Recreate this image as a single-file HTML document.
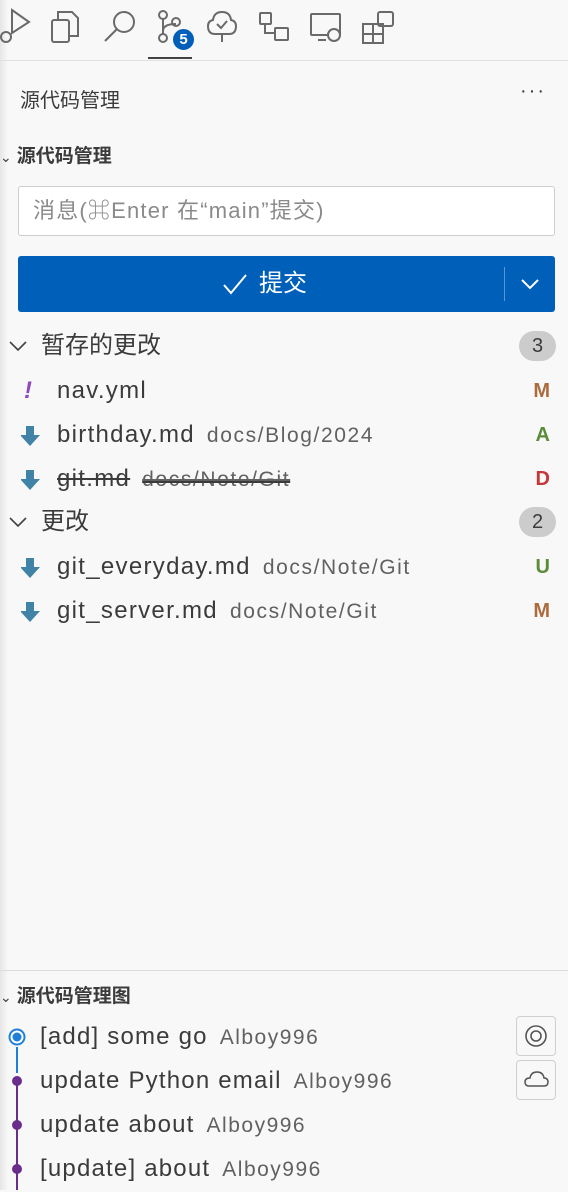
<!DOCTYPE html>
<html><head><meta charset="utf-8"><style>
*{margin:0;padding:0;box-sizing:border-box}
body{width:568px;height:1190px;overflow:hidden;background:#f8f8f8;font-family:"Liberation Sans","Noto Sans CJK SC",sans-serif;color:#3b3b3b;position:relative}
.abs{position:absolute;white-space:nowrap}
.shadow{position:absolute;left:0;top:0;width:8px;height:1190px;background:linear-gradient(90deg,#e6e6e6,#f8f8f8)}
.row{position:absolute;left:0;width:568px;height:44px;font-size:24px;line-height:44px}
.row .n{position:absolute;left:57px;letter-spacing:1.3px}
.row .d{font-size:21px;color:#616161;margin-left:12px;letter-spacing:1.6px}
.st{position:absolute;right:18px;font-weight:bold;font-size:20px}
.badge{position:absolute;right:12px;top:7px;width:37px;height:30px;border-radius:15px;background:#cccccc;color:#3b3b3b;font-size:20px;text-align:center;line-height:30px}
.arrow{position:absolute;left:21px;top:12px}
.g{position:absolute;left:40px;font-size:24px;line-height:44px;height:44px;letter-spacing:1.2px}
.g .d{font-size:21px;color:#616161;margin-left:12px;letter-spacing:1.5px}
</style></head><body>
<div class="shadow"></div>
<svg class="abs" style="left:0;top:0" width="400" height="62" viewBox="0 0 400 62" fill="none" stroke="#6a6a6a" stroke-width="2">
<path d="M12 10 L29 22 L12 33 Z"/><circle cx="6" cy="37" r="5"/>
<rect x="52" y="20" width="17" height="22" rx="2"/><path d="M58 20 V12 h14 l6 6 v18 h-9"/>
<circle cx="124" cy="22" r="10"/><path d="M117 29 L105 41"/>
<circle cx="163" cy="15" r="4"/><circle cx="163" cy="38" r="4"/><circle cx="176" cy="22" r="4"/><path d="M163 19 V34 M163 31 q0-7 13-7"/>
<path d="M215 34 q-7 0 -7-8 q0-5 5-6 q1-8 9-8 q8 0 9 8 q5 1 5 6 q0 8-7 8 h-14 M222 34 v8 M217 24 l4 4 l6-7"/>
<rect x="260" y="13" width="11" height="11" rx="1"/><rect x="275" y="28" width="13" height="12" rx="1"/><path d="M265 24 v9 h10"/>
<rect x="311" y="14" width="29" height="21" rx="1"/><path d="M318 40 h8"/><circle cx="334" cy="35" r="6" fill="#f8f8f8"/>
<rect x="363" y="24" width="10" height="10"/><rect x="373" y="24" width="10" height="10"/><rect x="363" y="34" width="10" height="9"/><rect x="373" y="34" width="10" height="9"/><rect x="378" y="12" width="15" height="14" rx="2"/>
</svg>
<div class="abs" style="left:171px;top:27px;width:25px;height:25px;border-radius:13px;background:#005fb8;border:2px solid #f8f8f8;color:#fff;font-weight:bold;font-size:15px;text-align:center;line-height:21px">5</div>
<div class="abs" style="left:148px;top:57px;width:44px;height:2px;background:#424242"></div>
<div class="abs" style="left:0;top:60px;width:568px;height:1px;background:#e0e0e0"></div>

<div class="abs" style="left:20px;top:84px;font-size:20px">源代码管理</div>
<div class="abs" style="left:520px;top:80px;font-size:20px;letter-spacing:2px">···</div>

<div class="abs" style="left:0;top:141px;font-size:19px;font-weight:bold"><span style="font-weight:normal;font-size:14px;margin-right:5px">⌄</span>源代码管理</div>

<div class="abs" style="left:18px;top:186px;width:537px;height:50px;border:1px solid #cecece;border-radius:3px;background:#fff;font-size:22px;color:#8a8a8a;line-height:48px;padding-left:14px;letter-spacing:1.2px">消息(⌘Enter 在“main”提交)</div>

<div class="abs" style="left:18px;top:256px;width:537px;height:56px;background:#005fb8;border-radius:3px;color:#fff">
<svg class="abs" style="left:204px;top:17px" width="26" height="22"><path d="M2 12 l7 8 L24 2" stroke="#fff" stroke-width="2" fill="none"/></svg>
<div class="abs" style="left:241px;line-height:56px;font-size:24px">提交</div>
<div class="abs" style="left:486px;top:11px;width:1px;height:34px;background:#5e95d0"></div>
<svg class="abs" style="left:502px;top:20px" width="20" height="16"><path d="M2 4 l8 8 l8-8" stroke="#fff" stroke-width="2" fill="none"/></svg>
</div>

<div class="row" style="top:324px"><svg class="abs" style="left:8px;top:15px" width="20" height="14"><path d="M2 3 l8 8 l8-8" stroke="#424242" stroke-width="1.6" fill="none"/></svg><span class="abs" style="left:41px">暂存的更改</span><span class="badge">3</span></div>
<div class="row" style="top:369px"><span class="abs" style="left:24px;color:#8a4bbb;font-weight:bold;font-style:italic">!</span><span class="n">nav.yml</span><span class="st" style="color:#ab6b3c">M</span></div>
<div class="row" style="top:413px"><svg class="arrow" width="20" height="22"><path d="M5 1 h8 v9 h6 l-10 11 l-10-11 h6z" fill="#4183a6"/></svg><span class="n">birthday.md<span class="d">docs/Blog/2024</span></span><span class="st" style="color:#5c8c3a">A</span></div>
<div class="row" style="top:457px"><svg class="arrow" width="20" height="22"><path d="M5 1 h8 v9 h6 l-10 11 l-10-11 h6z" fill="#4183a6"/></svg><span class="n" style="text-decoration:line-through">git.md<span class="d" style="text-decoration:line-through">docs/Note/Git</span></span><span class="st" style="color:#c4383b">D</span></div>
<div class="row" style="top:500px"><svg class="abs" style="left:8px;top:15px" width="20" height="14"><path d="M2 3 l8 8 l8-8" stroke="#424242" stroke-width="1.6" fill="none"/></svg><span class="abs" style="left:41px">更改</span><span class="badge">2</span></div>
<div class="row" style="top:545px"><svg class="arrow" width="20" height="22"><path d="M5 1 h8 v9 h6 l-10 11 l-10-11 h6z" fill="#4183a6"/></svg><span class="n">git_everyday.md<span class="d">docs/Note/Git</span></span><span class="st" style="color:#5c8c3a">U</span></div>
<div class="row" style="top:589px"><svg class="arrow" width="20" height="22"><path d="M5 1 h8 v9 h6 l-10 11 l-10-11 h6z" fill="#4183a6"/></svg><span class="n">git_server.md<span class="d">docs/Note/Git</span></span><span class="st" style="color:#ab6b3c">M</span></div>

<div class="abs" style="left:0;top:970px;width:568px;height:1px;background:#dcdcdc"></div>
<div class="abs" style="left:0;top:981px;font-size:19px;font-weight:bold"><span style="font-weight:normal;font-size:14px;margin-right:5px">⌄</span>源代码管理图</div>

<svg class="abs" style="left:0;top:1015px" width="40" height="175">
<path d="M17 32 V58" stroke="#1e7fd9" stroke-width="2"/>
<path d="M17 66 V175" stroke="#6a2d8c" stroke-width="2"/>
<circle cx="17" cy="22" r="8.5" fill="#1e7fd9"/><circle cx="17" cy="22" r="6.5" fill="#fff"/><circle cx="17" cy="22" r="4.5" fill="#1e7fd9"/>
<circle cx="17" cy="66" r="5" fill="#6a2d8c"/><circle cx="17" cy="110" r="5" fill="#6a2d8c"/><circle cx="17" cy="154" r="5" fill="#6a2d8c"/>
</svg>
<div class="g" style="top:1015px">[add] some go<span class="d">Alboy996</span></div>
<div class="g" style="top:1059px">update Python email<span class="d">Alboy996</span></div>
<div class="g" style="top:1103px">update about<span class="d">Alboy996</span></div>
<div class="g" style="top:1147px">[update] about<span class="d">Alboy996</span></div>

<div class="abs" style="left:516px;top:1016px;width:40px;height:40px;border:1px solid #d0d0d0;border-radius:4px"></div>
<svg class="abs" style="left:516px;top:1016px" width="40" height="40"><circle cx="20" cy="20" r="10" stroke="#555" stroke-width="1.6" fill="none"/><circle cx="20" cy="20" r="5" stroke="#555" stroke-width="1.6" fill="none"/></svg>
<div class="abs" style="left:516px;top:1060px;width:40px;height:40px;border:1px solid #d0d0d0;border-radius:4px"></div>
<svg class="abs" style="left:516px;top:1060px" width="40" height="40"><path d="M13 26 q-4 0-4-4 q0-4 5-4 q1-6 7-6 q6 0 7 6 q4 0 4 4 q0 4-4 4z" stroke="#555" stroke-width="1.5" fill="none"/></svg>
</body></html>
